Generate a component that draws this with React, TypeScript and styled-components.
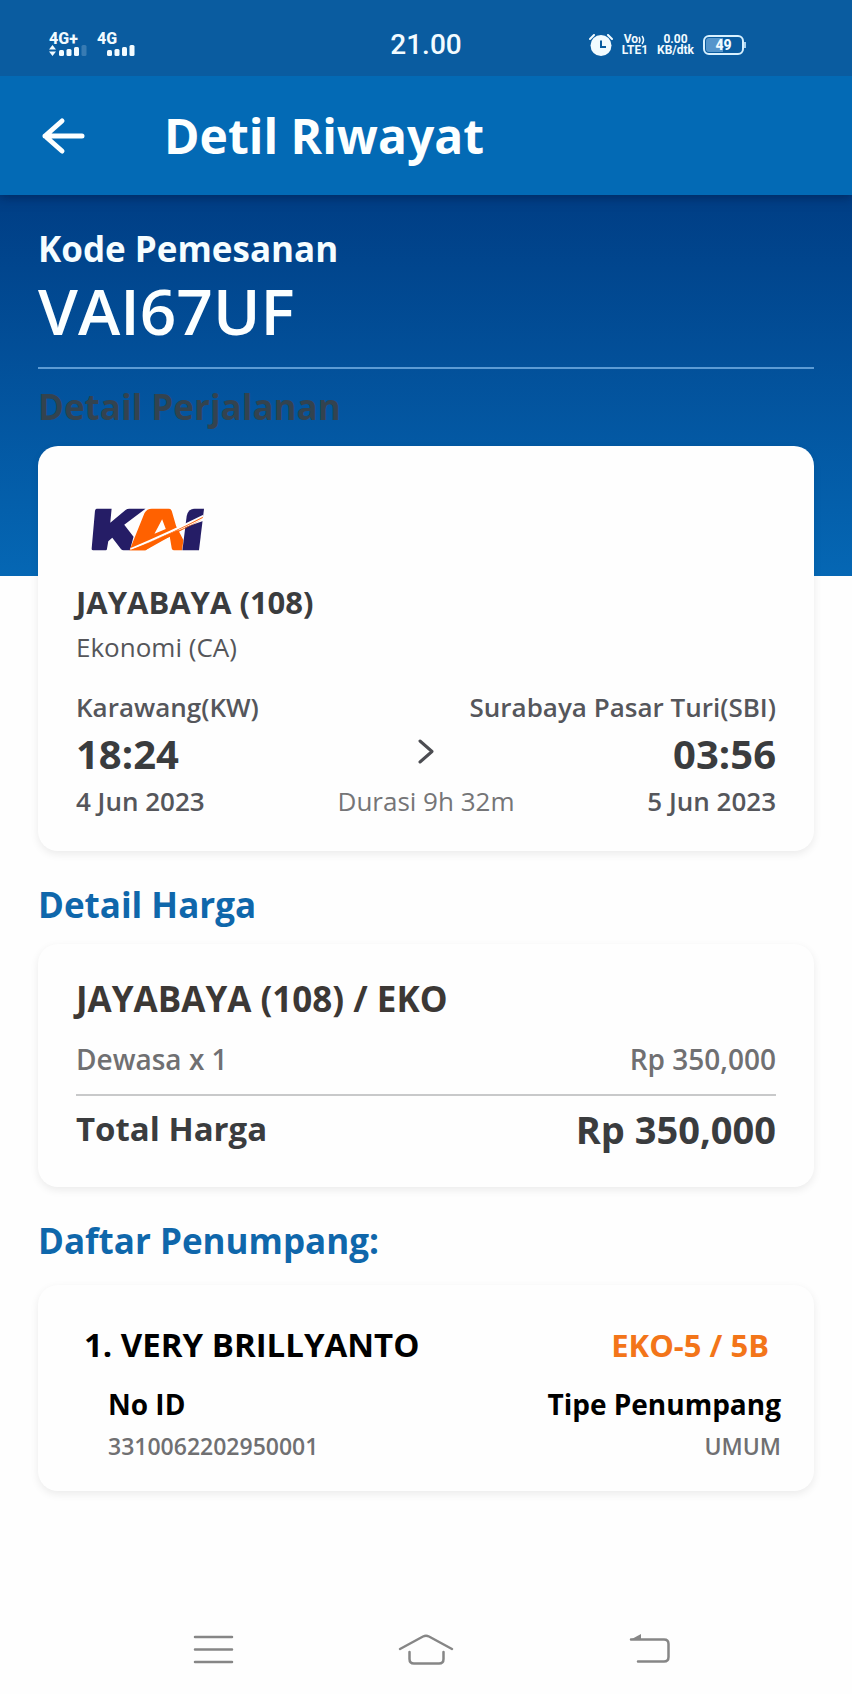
import React from "react";
import styled, { createGlobalStyle } from "styled-components";

const GlobalStyle = createGlobalStyle`
  *, *::before, *::after { box-sizing: border-box; }
  body { margin: 0; background: #fefefe; }
  h1, h2, h3, p, dl, dt, dd { margin: 0; padding: 0; }
  button { border: 0; padding: 0; background: none; color: inherit; font: inherit; cursor: pointer; }
`;

const Screen = styled.div`
  display: flex;
  flex-direction: column;
  min-height: 100vh;
  font-family: "Open Sans", "Noto Sans", sans-serif;
  color: #3a3c3e;
`;

/* ---------- status bar ---------- */

const StatusBar = styled.div`
  position: relative;
  z-index: 1;
  display: grid;
  grid-template-columns: 1fr auto 1fr;
  align-items: center;
  height: 76px;
  padding-top: 14px;
  background: #0a5ca0;
  color: #f2fbff;
  font-family: Roboto, sans-serif;
`;

const Signals = styled.div`
  display: flex;
  gap: 8px;
  padding-left: 49px;
`;

const Signal = styled.div`
  display: flex;
  flex-direction: column;
  width: 40px;
`;

const SignalLabel = styled.span`
  font-size: 16px;
  font-weight: 800;
  line-height: 12px;
`;

const Clock = styled.time`
  font-size: 28px;
  font-weight: 500;
  line-height: 32px;
`;

const StatusRight = styled.div`
  display: flex;
  align-items: center;
  justify-content: flex-end;
  gap: 9px;
  padding-right: 106px;
`;

const TinyStack = styled.div`
  display: flex;
  flex-direction: column;
  align-items: center;
  font-size: 12px;
  font-weight: 700;
  line-height: 11px;
`;

const VoLine = styled.span`
  display: flex;
  align-items: center;
`;

const Battery = styled.div`
  display: flex;
  align-items: center;
`;

const BatteryBody = styled.div`
  display: flex;
  align-items: center;
  justify-content: center;
  width: 41px;
  height: 20px;
  padding: 1px;
  border: 2px solid #d8f1ff;
  border-radius: 6px;
  background: linear-gradient(90deg, #5595cb 49%, transparent 49%);
  background-clip: content-box;
  font-size: 14px;
  font-weight: 800;
  line-height: 14px;
`;

const BatteryTip = styled.span`
  width: 2px;
  height: 6px;
  background: #a9d2ef;
`;

/* ---------- app bar ---------- */

const AppBar = styled.header`
  position: relative;
  display: flex;
  align-items: center;
  gap: 78px;
  height: 119px;
  padding: 0 40px;
  background: #036ab5;
  color: #fcffff;
  box-shadow: 0 2px 10px rgba(0, 20, 60, 0.5);
`;

const BackButton = styled.button`
  display: flex;
`;

const Title = styled.h1`
  font-size: 48px;
  font-weight: 700;
  line-height: 60px;
`;

/* ---------- content ---------- */

const Content = styled.main`
  flex: 1;
  padding: 30px 38px 40px;
  background: linear-gradient(180deg, #003e85 0%, #0567b4 100%) top / 100% 381px no-repeat;
`;

const Label = styled.p`
  font-size: 35px;
  font-weight: 700;
  line-height: 48px;
  color: #f6fdff;
`;

const BookingCode = styled.p`
  font-size: 64px;
  font-weight: 600;
  line-height: 76px;
  color: #fcffff;
`;

const Rule = styled.hr<{ $light?: boolean }>`
  height: 2px;
  margin: ${(p) => (p.$light ? "18px 0 14px" : "15px 0 9px")};
  border: 0;
  background: ${(p) => (p.$light ? "#5c9bd4" : "#c8c9ca")};
`;

const SectionTitle = styled.h2<{ $dark?: boolean; $gap?: number }>`
  margin: ${(p) => (p.$dark ? 0 : 30)}px 0 ${(p) => p.$gap ?? 15}px;
  font-size: 35px;
  font-weight: 700;
  line-height: 48px;
  color: ${(p) => (p.$dark ? "#33434f" : "#0f67ab")};
`;

const Card = styled.section<{ $pad: string }>`
  padding: ${(p) => p.$pad};
  border-radius: 20px;
  background: #fefefe;
  box-shadow: 0 3px 8px rgba(0, 0, 0, 0.08);
`;

const Logo = styled.svg`
  display: block;
  margin: 0 0 31px 15px;
`;

const TrainName = styled.h3`
  font-size: 31px;
  font-weight: 700;
  line-height: 40px;
`;

const TrainClass = styled.p`
  margin: 7px 0 24px;
  font-size: 26px;
  line-height: 36px;
  color: #55565a;
`;

const Row = styled.div`
  display: flex;
  align-items: center;
  justify-content: space-between;
`;

const TripRow = styled.div`
  display: grid;
  grid-template-columns: 1fr auto 1fr;
  align-items: center;
  margin-top: 3px;

  & > :last-child { text-align: right; }
`;

const Place = styled.span`
  font-size: 26px;
  font-weight: 600;
  line-height: 36px;
  color: #55565b;
`;

const Time = styled.time`
  font-size: 40px;
  font-weight: 700;
  line-height: 52px;
`;

const Duration = styled.span`
  font-size: 26px;
  line-height: 36px;
  color: #757577;
`;

const FareTitle = styled.h3`
  margin-bottom: 16px;
  font-size: 35px;
  font-weight: 700;
  line-height: 48px;
  color: #3c3835;
`;

const FareText = styled.span`
  font-size: 28px;
  font-weight: 600;
  line-height: 40px;
  color: #707072;
`;

const TotalLabel = styled.span`
  font-size: 33px;
  font-weight: 700;
  line-height: 48px;
`;

const TotalValue = styled.strong`
  font-size: 38px;
  font-weight: 700;
  line-height: 48px;
`;

const PassengerRow = styled(Row)`
  padding: 0 12px 0 8px;
  margin-bottom: 17px;
  font-size: 33px;
  font-weight: 700;
  line-height: 44px;
  color: #000;
`;

const Seat = styled.span`
  font-size: 31px;
  color: #f37519;
`;

const PassengerInfo = styled.dl`
  display: flex;
  justify-content: space-between;
  padding-left: 32px;
`;

const InfoItem = styled.div<{ $end?: boolean }>`
  text-align: ${(p) => (p.$end ? "right" : "left")};

  dt {
    margin-bottom: 4px;
    font-size: 28px;
    font-weight: 700;
    line-height: 40px;
    color: #000;
  }

  dd {
    font-size: 23px;
    font-weight: 600;
    line-height: 36px;
    color: #707072;
  }
`;

/* ---------- system navigation ---------- */

const NavBar = styled.nav`
  display: grid;
  grid-template-columns: repeat(3, 1fr);
  height: 88px;
  padding: 0 12.5%;
  color: #868686;
`;

const NavButton = styled.button`
  display: flex;
  align-items: center;
  justify-content: center;
`;

const SignalBars = ({ weak }: { weak?: boolean }) => (
  <svg width="40" height="12" viewBox="0 0 40 12" fill="currentColor" aria-hidden="true">
    {weak && <path d="M0 4.5 3.5 0 7 4.5zM0 6.500 7 6.500 3.500 11z" />}
    <rect x="10" y="5" width="5" height="6" rx="1.500" />
    <rect x="17.500" y="4" width="5" height="7" rx="1.500" />
    <rect x="25" y="2" width="5" height="9" rx="1.500" />
    <rect x="32.500" y="0" width="5" height="11" rx="1.500" opacity={weak ? 0.2 : 1} />
  </svg>
);

const AlarmIcon = () => (
  <svg width="24" height="22" viewBox="0 0 24 22" aria-hidden="true">
    <circle cx="12" cy="11.500" r="10.500" fill="currentColor" />
    <path d="M1 5 5 1M23 5 19 1" stroke="currentColor" strokeWidth="2" strokeLinecap="round" />
    <path d="M12 6.500V13H17" fill="none" stroke="#0a5ca0" strokeWidth="2" />
  </svg>
);

const KaiLogo = () => (
  <Logo width="113" height="43" viewBox="184 204 340 129" role="img" aria-label="KAI">
    <path
      fill="#251d66"
      d="M202 206H246L242 248 288 210Q293 206 299 206H348L284 254 312 290 301 331H282Q277 331 274 327L248 293 236 304 232 327Q232 331 228 331H190Q185 331 186 326L196 212Q197 206 202 206Z"
    />
    <path
      fill="#ff6100"
      fillRule="evenodd"
      d="M345 219Q352 206 367 206H418Q425 206 427 213L440 258 462 300 458 331H433Q428 331 427 326L421 290Q380 306 348 331H300L306 316ZM398 238 375 281 409 267Z"
    />
    <path fill="#251d66" d="M472 228Q476 206 496 206H524L509 331H459Z" />
    <path fill="#fff" d="M302 325Q425 272 522 224L521 243Q440 270 364 306 334 319 303 331Z" />
    <path fill="#ff6100" d="M322 322Q430 278 521 230L520 234Q430 281 322 322ZM300 331Q430 283 520 238 430 284 348 331Z" />
  </Logo>
);

export default function App() {
  return (
    <Screen>
      <GlobalStyle />
      <StatusBar>
        <Signals>
          <Signal>
            <SignalLabel>4G+</SignalLabel>
            <SignalBars weak />
          </Signal>
          <Signal>
            <SignalLabel>4G</SignalLabel>
            <SignalBars />
          </Signal>
        </Signals>
        <Clock>21.00</Clock>
        <StatusRight>
          <AlarmIcon />
          <TinyStack>
            <VoLine>
              Vo
              <svg width="8" height="10" viewBox="0 0 8 10" fill="none" stroke="currentColor" aria-hidden="true">
                <path d="M1 2Q3 5 1 8M4 1Q7 5 4 9" strokeWidth="1.500" />
              </svg>
            </VoLine>
            <span>LTE1</span>
          </TinyStack>
          <TinyStack>
            <span>0.00</span>
            <span>KB/dtk</span>
          </TinyStack>
          <Battery>
            <BatteryBody>49</BatteryBody>
            <BatteryTip />
          </Battery>
        </StatusRight>
      </StatusBar>

      <AppBar>
        <BackButton aria-label="Kembali">
          <svg width="46" height="38" viewBox="0 0 46 38" fill="none" stroke="currentColor" strokeWidth="5" strokeLinecap="round" strokeLinejoin="round">
            <path d="M42 19H5M22 4 5 19 22 34" />
          </svg>
        </BackButton>
        <Title>Detil Riwayat</Title>
      </AppBar>

      <Content>
        <Label>Kode Pemesanan</Label>
        <BookingCode>VAI67UF</BookingCode>
        <Rule $light />
        <SectionTitle $dark>Detail Perjalanan</SectionTitle>
        <Card $pad="62px 38px 32px">
          <KaiLogo />
          <TrainName>JAYABAYA (108)</TrainName>
          <TrainClass>Ekonomi (CA)</TrainClass>
          <Row>
            <Place>Karawang(KW)</Place>
            <Place>Surabaya Pasar Turi(SBI)</Place>
          </Row>
          <TripRow>
            <Time>18:24</Time>
            <svg width="20" height="30" viewBox="0 0 20 30" fill="none" stroke="#4c4d52" strokeWidth="3" strokeLinecap="round" strokeLinejoin="round" aria-hidden="true">
              <path d="M4 2 16 12.500 4 23" />
            </svg>
            <Time>03:56</Time>
          </TripRow>
          <TripRow>
            <Place>4 Jun 2023</Place>
            <Duration>Durasi 9h 32m</Duration>
            <Place>5 Jun 2023</Place>
          </TripRow>
        </Card>

        <SectionTitle>Detail Harga</SectionTitle>
        <Card $pad="31px 38px 34px">
          <FareTitle>JAYABAYA (108) / EKO</FareTitle>
          <Row>
            <FareText>Dewasa x 1</FareText>
            <FareText>Rp 350,000</FareText>
          </Row>
          <Rule />
          <Row>
            <TotalLabel>Total Harga</TotalLabel>
            <TotalValue>Rp 350,000</TotalValue>
          </Row>
        </Card>

        <SectionTitle $gap={20}>Daftar Penumpang:</SectionTitle>
        <Card $pad="38px 33px 27px 38px">
          <PassengerRow>
            <span>1. VERY BRILLYANTO</span>
            <Seat>EKO-5 / 5B</Seat>
          </PassengerRow>
          <PassengerInfo>
            <InfoItem>
              <dt>No ID</dt>
              <dd>3310062202950001</dd>
            </InfoItem>
            <InfoItem $end>
              <dt>Tipe Penumpang</dt>
              <dd>UMUM</dd>
            </InfoItem>
          </PassengerInfo>
        </Card>
      </Content>

      <NavBar aria-label="Navigasi sistem">
        <NavButton aria-label="Menu">
          <svg width="42" height="32" viewBox="0 0 42 32" stroke="currentColor" strokeWidth="2.500" strokeLinecap="round">
            <path d="M3 3H40M3 15.500H40M3 28H40" />
          </svg>
        </NavButton>
        <NavButton aria-label="Beranda">
          <svg width="56" height="34" viewBox="0 0 56 34" fill="none" stroke="currentColor" strokeWidth="2.500" strokeLinecap="round">
            <path d="M2 16 25 3.500Q28 2 31 3.500L54 16M11.500 19V26Q11.500 30.500 16 30.500H41Q45.500 30.500 45.500 26V19" />
          </svg>
        </NavButton>
        <NavButton aria-label="Kembali">
          <svg width="64" height="34" viewBox="0 0 64 34" fill="none" stroke="currentColor" strokeWidth="2.500" strokeLinecap="round">
            <path d="M24 6.500H57Q61.500 6.500 61.500 11V24Q61.500 28.500 57 28.500H31" />
            <path d="M23 7 34 1V7Z" fill="currentColor" stroke="none" />
          </svg>
        </NavButton>
      </NavBar>
    </Screen>
  );
}
